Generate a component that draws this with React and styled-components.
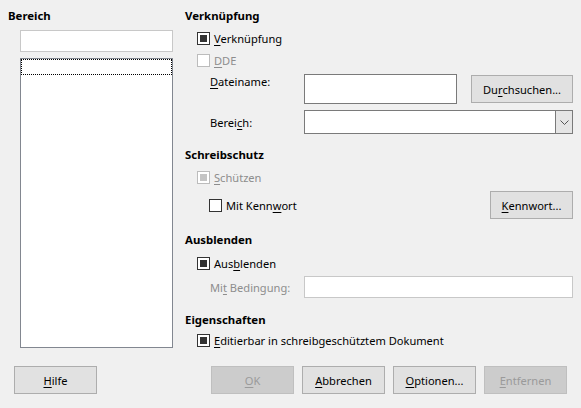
import React from "react";
import styled, { createGlobalStyle } from "styled-components";

const GlobalStyle = createGlobalStyle`
  html, body { margin: 0; padding: 0; background: #f0f0f0; }
  body {
    width: 581px; height: 408px; overflow: hidden;
    font-family: "Noto Sans", "Open Sans", sans-serif;
    font-size: 11.1px; color: #000;
  }
`;

const Dialog = styled.div`
  width: 581px; height: 408px; box-sizing: border-box;
  display: flex; flex-direction: column; padding-top: 8px;
`;
const Body = styled.div`
  display: flex; height: 340px;
`;
const LeftCol = styled.div`
  width: 185px; box-sizing: border-box; padding-left: 8px;
  display: flex; flex-direction: column;
`;
const RightCol = styled.div`
  width: 388px; display: flex; flex-direction: column;
`;
const Heading = styled.div`
  font-weight: 700; font-size: 11.4px; height: 16px; line-height: 16px;
  margin-top: ${p => p.$mt || 0}px; white-space: nowrap;
`;
const TextInput = styled.div`
  box-sizing: border-box; background: #fff;
  border: 1px solid ${p => p.$light ? "#c8c8c8" : "#7a7a7a"};
  width: ${p => p.$w}px; height: ${p => p.$h}px;
  margin-left: ${p => p.$ml || 0}px; margin-top: ${p => p.$mt || 0}px;
  flex: none;
`;
const ListBox = styled.div`
  box-sizing: border-box; background: #fff; border: 1px solid #828790;
  width: 153px; height: 290px; margin: 6px 0 0 12px; padding: 0;
`;
const FocusRow = styled.div`
  box-sizing: border-box; height: 16px; margin: 0;
  border: 1px dotted #000;
`;
const CheckRow = styled.div`
  display: flex; align-items: center; height: ${p => p.$h || 16}px;
  margin-top: ${p => p.$mt || 0}px; padding-left: ${p => p.$pl ?? 12}px;
  color: ${p => p.$disabled ? "#8d8d8d" : "#000"}; white-space: nowrap;
`;
const Box = styled.span`
  box-sizing: border-box; width: 13px; height: 13px; flex: none;
  border: 1px solid ${p => p.$disabled ? "#bcbcbc" : "#333"};
  background: #fff; display: flex; align-items: center; justify-content: center;
  margin-right: 4px;
  &::after {
    content: ""; display: ${p => p.$checked ? "block" : "none"};
    width: 7px; height: 7px; background: ${p => p.$disabled ? "#c4c4c4" : "#333"};
  }
`;
const FieldRow = styled.div`
  display: flex; align-items: center; height: ${p => p.$h}px;
  margin-top: ${p => p.$mt || 0}px; padding-left: 25px;
`;
const FieldLabel = styled.span`
  width: 94px; flex: none; line-height: 16px;
  align-self: ${p => p.$top ? "flex-start" : "center"};
  color: ${p => p.$disabled ? "#8d8d8d" : "#000"}; white-space: nowrap;
  padding-top: ${p => p.$top ? 0 : 2}px;
`;
const Combo = styled.div`
  box-sizing: border-box; width: 269px; height: 24px; background: #fff;
  border: 1px solid #7a7a7a; display: flex; justify-content: flex-end;
`;
const ComboBtn = styled.div`
  width: 17px; height: 100%; box-sizing: border-box; background: #e5e5e5;
  border-left: 1px solid #7a7a7a; display: flex; align-items: center; justify-content: center;
`;
const Button = styled.div`
  box-sizing: border-box; width: ${p => p.$w || 83}px; height: 28px; flex: none;
  border: 1px solid ${p => p.$disabled ? "#bfbfbf" : "#adadad"};
  background: ${p => p.$disabled ? "#cccccc" : "#e1e1e1"};
  color: ${p => p.$disabled ? "#9a9a9a" : "#000"};
  display: flex; align-items: center; justify-content: center;
  margin-left: ${p => p.$auto ? "auto" : "0"}; white-space: nowrap;
`;
const ButtonBar = styled.div`
  display: flex; align-items: center; margin-top: 18px; padding: 0 14px;
`;
const ButtonGroup = styled.div`
  display: flex; gap: 8px; margin-left: auto;
`;
const Mn = styled.u`
  text-decoration: underline; text-underline-offset: 2px; text-decoration-thickness: 1px;
`;

export default function App() {
  return (
    <Dialog>
      <GlobalStyle />
      <Body>
        <LeftCol>
          <Heading>Bereich</Heading>
          <TextInput $light $w={153} $h={22} $ml={12} $mt={6} />
          <ListBox><FocusRow /></ListBox>
        </LeftCol>
        <RightCol>
          <Heading>Verknüpfung</Heading>
          <CheckRow $mt={6}><Box $checked /><span><Mn>V</Mn>erknüpfung</span></CheckRow>
          <CheckRow $mt={6} $disabled><Box $disabled /><span><Mn>D</Mn>DE</span></CheckRow>
          <FieldRow $h={30} $mt={6}>
            <FieldLabel $top><Mn>D</Mn>ateiname:</FieldLabel>
            <TextInput $w={153} $h={30} />
            <Button $w={102} $auto>Du<Mn>r</Mn>chsuchen...</Button>
          </FieldRow>
          <FieldRow $h={24} $mt={6}>
            <FieldLabel>Berei<Mn>c</Mn>h:</FieldLabel>
            <Combo>
              <ComboBtn>
                <svg width="9" height="5" viewBox="0 0 9 5"><path d="M0.5 0.5 L4.5 4.5 L8.5 0.5" fill="none" stroke="#555" strokeWidth="1" /></svg>
              </ComboBtn>
            </Combo>
          </FieldRow>
          <Heading $mt={13}>Schreibschutz</Heading>
          <CheckRow $mt={6} $disabled><Box $checked $disabled /><span><Mn>S</Mn>chützen</span></CheckRow>
          <CheckRow $mt={6} $h={28} $pl={24}>
            <Box /><span>Mit Kenn<Mn>w</Mn>ort</span>
            <Button $auto><Mn>K</Mn>ennwort...</Button>
          </CheckRow>
          <Heading $mt={13}>Ausblenden</Heading>
          <CheckRow $mt={7}><Box $checked /><span>Aus<Mn>b</Mn>lenden</span></CheckRow>
          <FieldRow $h={22} $mt={5}>
            <FieldLabel $disabled>Mi<Mn>t</Mn> Bedingung:</FieldLabel>
            <TextInput $light $w={269} $h={22} />
          </FieldRow>
          <Heading $mt={14}>Eigenschaften</Heading>
          <CheckRow $mt={4}><Box $checked /><span><Mn>E</Mn>ditierbar in schreibgeschütztem Dokument</span></CheckRow>
        </RightCol>
      </Body>
      <ButtonBar>
        <Button><Mn>H</Mn>ilfe</Button>
        <ButtonGroup>
          <Button $disabled><Mn>O</Mn>K</Button>
          <Button><Mn>A</Mn>bbrechen</Button>
          <Button><Mn>O</Mn>ptionen...</Button>
          <Button $disabled><Mn>E</Mn>ntfernen</Button>
        </ButtonGroup>
      </ButtonBar>
    </Dialog>
  );
}
